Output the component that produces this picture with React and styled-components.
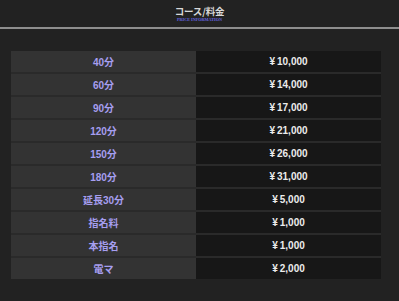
import React from 'react'
import styled, { createGlobalStyle } from 'styled-components'

const GlobalStyle = createGlobalStyle`
  html, body {
    margin: 0;
    padding: 0;
    background: #222222;
  }
  body {
    font-family: "Liberation Sans", "Noto Sans CJK JP", sans-serif;
  }
`

const prices = [
  { label: '40分', price: '10,000' },
  { label: '60分', price: '14,000' },
  { label: '90分', price: '17,000' },
  { label: '120分', price: '21,000' },
  { label: '150分', price: '26,000' },
  { label: '180分', price: '31,000' },
  { label: '延長30分', price: '5,000' },
  { label: '指名料', price: '1,000' },
  { label: '本指名', price: '1,000' },
  { label: '電マ', price: '2,000' },
]

export default function App() {
  return (
    <Page>
      <GlobalStyle />
      <Header>
        <Title>コース/料金</Title>
        <Subtitle>PRICE INFORMATION</Subtitle>
      </Header>
      <Table>
        {prices.map((row) => (
          <Row key={row.label}>
            <Label>{row.label}</Label>
            <Price>
              <Yen>¥</Yen>
              {row.price}
            </Price>
          </Row>
        ))}
      </Table>
    </Page>
  )
}

const Page = styled.div`
  width: 399px;
  height: 301px;
  background: #222222;
  overflow: hidden;
`

const Header = styled.div`
  display: flex;
  flex-direction: column;
  align-items: center;
  height: 29px;
  box-sizing: border-box;
  padding-top: 6px;
  border-bottom: 2px solid #8e8e8e;
`

const Title = styled.h1`
  margin: 0;
  font-family: "Noto Sans CJK JP", sans-serif;
  font-size: 9.5px;
  line-height: 11px;
  font-weight: 700;
  color: #d8d8d8;
  letter-spacing: -0.2px;
`

const Subtitle = styled.div`
  font-family: "Liberation Serif", serif;
  font-size: 4.2px;
  line-height: 5px;
  font-weight: 700;
  color: #6666e0;
`

const Table = styled.div`
  margin: 22px 18px 0 11px;
  display: flex;
  flex-direction: column;
  gap: 2px;
  background: #2a2a2a;
`

const Row = styled.div`
  display: grid;
  grid-template-columns: 185px 185px;
  height: 21px;
`

const Cell = styled.div`
  display: flex;
  align-items: center;
  justify-content: center;
  font-size: 10px;
  font-weight: 700;
`

const Label = styled(Cell)`
  background: #333333;
  color: #a69ef0;
`

const Price = styled(Cell)`
  background: #171717;
  color: #ececec;
`

const Yen = styled.span`
  margin-right: 2px;
`
